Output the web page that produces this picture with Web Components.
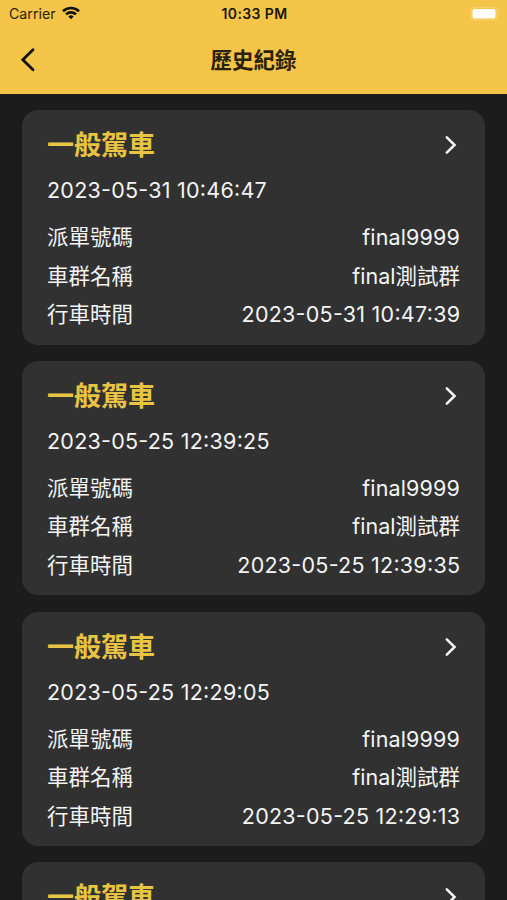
<!DOCTYPE html>
<html lang="zh-Hant"><head><meta charset="utf-8"><title>歷史紀錄</title>
<style>html,body{margin:0;height:900px;overflow:hidden;background:#1c1c1c}body{font-family:Inter,"Noto Sans CJK TC",sans-serif}</style></head>
<body><history-screen></history-screen>
<script>
class StatusBar extends HTMLElement{constructor(){super();this.attachShadow({mode:'open'}).innerHTML=`
<style>:host{display:grid;grid-template-columns:1fr auto 1fr;align-items:center;height:27px;padding:0 7px 0 9px;box-sizing:border-box;font-size:14.2px;color:#2a220c}
.l{display:flex;align-items:center;gap:6px}.l svg{margin-bottom:2px}b{font-weight:600;font-size:14px;letter-spacing:.4px;color:#1a1608}.r{justify-self:end;display:flex}svg{display:block}</style>
<div class="l"><span>Carrier</span><svg width="18" height="14" viewBox="0 0 18 14" fill="none" stroke="#111" stroke-width="2.6"><path d="M1 5.2a11.5 11.5 0 0 1 16 0M4 8.4a7.2 7.2 0 0 1 10 0"/><path d="M9 13.3 6.3 10.6a3.9 3.9 0 0 1 5.4 0z" fill="#111" stroke="none"/></svg></div>
<b>10:33 PM</b><div class="r"><svg width="30" height="14" viewBox="0 0 30 14"><rect x="1" y=".5" width="26" height="12.5" rx="3.5" fill="none" stroke="#f8d573"/><rect x="2.5" y="2" width="23" height="9.5" rx="2" fill="#fff"/><path d="M28.2 5q1.8 1.8 0 3.6z" fill="#f8d573"/></svg></div>`}}
class AppBar extends HTMLElement{constructor(){super();this.attachShadow({mode:'open'}).innerHTML=`
<style>:host{display:grid;grid-template-columns:40px 1fr 40px;align-items:center;height:66.5px;padding:0 16px;box-sizing:border-box;color:#2a220c}h1{margin:0;text-align:center;font-size:21.5px;line-height:30px;font-weight:700}svg{display:block}</style>
<svg width="24" height="26" viewBox="0 0 24 26" fill="none" stroke="#111" stroke-width="2.8" stroke-linecap="round"><path d="M17 2.8 6.8 12.8l10.200 10"/></svg><h1><slot></slot></h1>`}}
class DetailRow extends HTMLElement{constructor(){super();this.attachShadow({mode:'open'}).innerHTML=`
<style>:host{display:flex;justify-content:space-between;height:38.6px;line-height:38.6px;font-size:21.5px;white-space:nowrap}</style>
<span>${this.getAttribute('label')}</span><slot></slot>`}}
class TripCard extends HTMLElement{constructor(){super();const a=n=>this.getAttribute(n);this.attachShadow({mode:'open'}).innerHTML=`
<style>:host{display:block;height:234.6px;box-sizing:border-box;padding:15px 25px 0;border-radius:16px;background:#313131;color:#f4f4f4;flex:none}
header{display:flex;justify-content:space-between;align-items:center;height:40px}h2{margin:2px 0 0;font-size:27px;line-height:40px;color:#e8c344;font-weight:700}
svg{display:block;margin-right:1px}time{display:block;height:53px;line-height:50px;font-size:21.5px;white-space:nowrap}
time,.t{letter-spacing:.25px;font-feature-settings:"calt" 1}.t{margin-right:-.25px}.n{letter-spacing:.15px}</style>
<header><h2>一般駕車</h2><svg width="16" height="22" viewBox="0 0 16 22" fill="none" stroke="#f4f4f4" stroke-width="2.5" stroke-linecap="round"><path d="M3.8 3.3 11.6 11 3.800 18.700"/></svg></header>
${a('start')?`<time>${a('start')}</time>
<detail-row label="派單號碼"><span class="n">final9999</span></detail-row><detail-row label="車群名稱">final測試群</detail-row><detail-row label="行車時間"><span class="t">${a('end')}</span></detail-row>`:''}`}}
class HistoryScreen extends HTMLElement{constructor(){super();this.attachShadow({mode:'open'}).innerHTML=`
<style>:host{display:flex;flex-direction:column;height:900px;overflow:hidden;background:#1c1c1c}.top{background:#f4c548;flex:none}main{display:flex;flex-direction:column;gap:16.2px;padding:16.5px 22px;min-height:0;overflow:hidden}</style>
<div class="top"><status-bar></status-bar><app-bar>歷史紀錄</app-bar></div><main>
<trip-card start="2023-05-31 10:46:47" end="2023-05-31 10:47:39"></trip-card>
<trip-card start="2023-05-25 12:39:25" end="2023-05-25 12:39:35"></trip-card>
<trip-card start="2023-05-25 12:29:05" end="2023-05-25 12:29:13"></trip-card>
<trip-card></trip-card></main>`}}
customElements.define('status-bar',StatusBar);customElements.define('app-bar',AppBar);customElements.define('detail-row',DetailRow);customElements.define('trip-card',TripCard);customElements.define('history-screen',HistoryScreen);
</script></body></html>
